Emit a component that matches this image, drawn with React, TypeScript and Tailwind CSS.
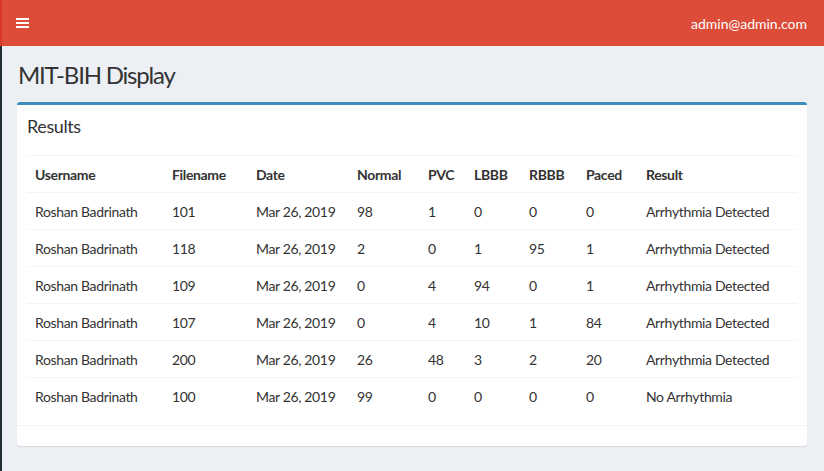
import React from "react";

const rows = [
  ["Roshan Badrinath", "101", "Mar 26, 2019", "98", "1", "0", "0", "0", "Arrhythmia Detected"],
  ["Roshan Badrinath", "118", "Mar 26, 2019", "2", "0", "1", "95", "1", "Arrhythmia Detected"],
  ["Roshan Badrinath", "109", "Mar 26, 2019", "0", "4", "94", "0", "1", "Arrhythmia Detected"],
  ["Roshan Badrinath", "107", "Mar 26, 2019", "0", "4", "10", "1", "84", "Arrhythmia Detected"],
  ["Roshan Badrinath", "200", "Mar 26, 2019", "26", "48", "3", "2", "20", "Arrhythmia Detected"],
  ["Roshan Badrinath", "100", "Mar 26, 2019", "99", "0", "0", "0", "0", "No Arrhythmia"],
];

const headers = ["Username", "Filename", "Date", "Normal", "PVC", "LBBB", "RBBB", "Paced", "Result"];
const widths = [137, 84, 101, 71, 46, 55, 57, 60, 159];

export default function App() {
  return (
    <div
      className="w-[824px] h-[471px] bg-[#ecf0f5] text-[#333] overflow-hidden flex flex-col"
      style={{ fontFamily: "Lato, 'Open Sans', sans-serif" }}
    >
      <header className="h-[46px] bg-[#dd4b39] flex items-center shrink-0">
        <div className="w-[2px] h-full bg-[#d73925]" />
        <button className="ml-[14px] w-[13px] h-[10px] flex flex-col justify-between">
          <span className="block h-[2px] w-full bg-white" />
          <span className="block h-[2px] w-full bg-white" />
          <span className="block h-[2px] w-full bg-white" />
        </button>
        <div className="ml-auto mr-[17px] text-white text-[14px]">admin@admin.com</div>
      </header>
      <div className="flex flex-1">
        <div className="w-[2px] bg-[#222d32]" />
        <main className="flex-1 pl-[15px] pr-[15px]">
          <h1 className="text-[24px] leading-none mt-[17px] ml-[1px] h-[39px] font-normal tracking-[-1.2px]">MIT-BIH Display</h1>
          <div className="bg-white border-t-[3px] border-[#3c8dbc] rounded-[3px] shadow-[0_1px_1px_rgba(0,0,0,0.1)] w-[790px]">
            <div className="px-[10px] pt-[12px] pb-[20px]">
              <h3 className="text-[18px] leading-none tracking-[-0.4px]">Results</h3>
            </div>
            <div className="px-[10px] pb-[10px]">
              <table className="w-[770px] table-fixed border-collapse text-[14px] tracking-[-0.35px]">
                <colgroup>
                  {widths.map((w, i) => (
                    <col key={i} style={{ width: w }} />
                  ))}
                </colgroup>
                <thead>
                  <tr className="border-t border-[#f4f4f4] h-[37px]">
                    {headers.map((h) => (
                      <th key={h} className="text-left font-bold px-[8px] align-middle border-b border-[#f4f4f4]">
                        {h}
                      </th>
                    ))}
                  </tr>
                </thead>
                <tbody>
                  {rows.map((r, i) => (
                    <tr key={i} className="h-[37px] border-t border-[#f4f4f4]">
                      {r.map((c, j) => (
                        <td key={j} className="px-[8px] align-middle whitespace-nowrap">
                          {c}
                        </td>
                      ))}
                    </tr>
                  ))}
                </tbody>
              </table>
            </div>
            <div className="border-t border-[#f4f4f4] h-[21px]" />
          </div>
        </main>
      </div>
    </div>
  );
}
